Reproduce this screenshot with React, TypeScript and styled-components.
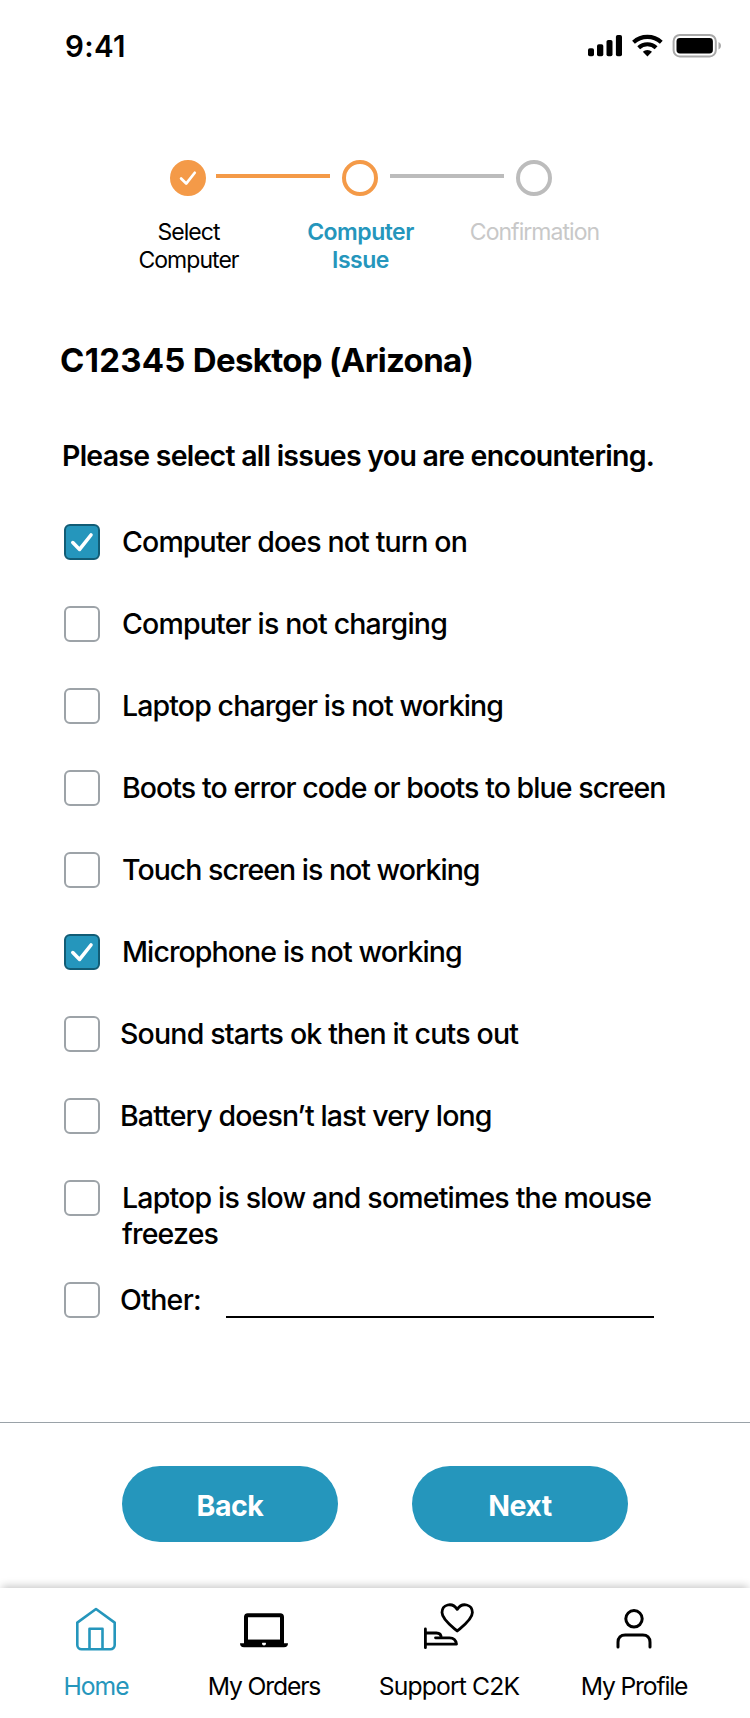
import React from 'react';
import styled, { createGlobalStyle } from 'styled-components';

const BLUE = '#2596bc';
const ORANGE = '#f49a48';
const GREY = '#bcbcbc';

const GlobalStyle = createGlobalStyle`
  *, *::before, *::after { box-sizing: border-box; }
  body { margin: 0; background: #fff; }
  button { font: inherit; border: 0; }
`;

const Screen = styled.div`
  display: flex;
  flex-direction: column;
  width: 750px;
  height: 1718px;
  overflow: hidden;
  background: #fff;
  color: #000;
  font-family: Inter, 'Liberation Sans', sans-serif;
`;

const StatusBar = styled.header`
  display: flex;
  justify-content: space-between;
  align-items: center;
  height: 92px;
  padding: 0 29px 0 65px;
`;

const Clock = styled.span`
  font-size: 29.5px;
  font-weight: 600;
  letter-spacing: 0.3px;
`;

const Stepper = styled.ol`
  display: flex;
  align-items: flex-start;
  list-style: none;
  margin: 68px 0 0 102px;
  padding: 0;
  height: 180px;
`;

const Step = styled.li<{ $width: number }>`
  display: flex;
  flex-direction: column;
  align-items: center;
  width: ${(p) => p.$width}px;
`;

const StepMark = styled.span<{ $state: StepState }>`
  display: grid;
  place-items: center;
  width: 36px;
  height: 36px;
  border-radius: 50%;
  border: 4px solid ${(p) => (p.$state === 'upcoming' ? GREY : ORANGE)};
  background: ${(p) => (p.$state === 'done' ? ORANGE : '#fff')};
`;

const StepLabel = styled.span<{ $state: StepState }>`
  margin-top: 22px;
  padding-left: 1px;
  font-size: 23px;
  line-height: 28px;
  text-align: center;
  white-space: pre-line;
  letter-spacing: ${(p) => (p.$state === 'current' ? -0.5 : -0.95)}px;
  font-weight: ${(p) => (p.$state === 'current' ? 600 : 400)};
  color: ${(p) => ({ done: '#000', current: BLUE, upcoming: '#c8c8c8' })[p.$state]};
`;

const StepLine = styled.li<{ $color: string; $lead: number }>`
  flex: none;
  width: 114px;
  height: 4px;
  margin: 14px -56px 0 ${(p) => p.$lead - 86}px;
  background: ${(p) => p.$color};
`;

const Content = styled.main`
  flex: 1;
  padding-left: 60px;
`;

const Title = styled.h1`
  margin: 0;
  font-size: 33px;
  line-height: 40px;
  font-weight: 700;
  letter-spacing: -0.68px;
`;

const AssetCode = styled.span`
  letter-spacing: 0.25px;
`;

const Prompt = styled.h2`
  margin: 58px 0 0 2px;
  font-size: 28.5px;
  line-height: 36px;
  font-weight: 600;
  letter-spacing: -0.75px;
`;

const IssueList = styled.ul`
  list-style: none;
  margin: 50px 0 0 4px;
  padding: 0;
`;

const Issue = styled.li<{ $gap: number }>`
  display: flex;
  align-items: flex-start;
  min-height: ${(p) => p.$gap}px;
`;

const CheckBox = styled.span<{ $checked?: boolean }>`
  display: grid;
  place-items: center;
  flex: none;
  width: 36px;
  height: 36px;
  border-radius: 6px;
  border: 2px solid ${(p) => (p.$checked ? '#125c75' : '#9da3a8')};
  background: ${(p) => (p.$checked ? BLUE : '#fff')};
`;

const IssueLabel = styled.span<{ $indent: number; $spacing: number }>`
  margin-left: ${(p) => p.$indent}px;
  font-size: 28.5px;
  line-height: 36px;
  font-weight: 500;
  letter-spacing: ${(p) => p.$spacing}px;
  white-space: pre-line;
`;

const OtherField = styled.span`
  width: 428px;
  height: 36px;
  margin-left: 25px;
  border-bottom: 2px solid #000;
`;

const Actions = styled.div`
  display: flex;
  justify-content: center;
  gap: 74px;
  height: 166px;
  padding-top: 43px;
  border-top: 1px solid #9aa2a8;
`;

const PillButton = styled.button`
  width: 216px;
  height: 76px;
  padding: 2px 0 0;
  border-radius: 38px;
  background: ${BLUE};
  color: #fff;
  font-size: 28.5px;
  font-weight: 700;
  letter-spacing: -0.45px;
`;

const TabBar = styled.nav`
  display: flex;
  height: 130px;
  background: #fff;
  box-shadow: 0 -4px 8px -2px rgba(0, 0, 0, 0.22);
`;

const Tab = styled.a<{ $active?: boolean; $width: number }>`
  display: flex;
  flex-direction: column;
  align-items: center;
  width: ${(p) => p.$width}px;
  padding-top: 12px;
  color: ${(p) => (p.$active ? BLUE : '#000')};
`;

const TabLabel = styled.span<{ $spacing: number }>`
  margin-top: 14px;
  font-size: 24.7px;
  line-height: 32px;
  letter-spacing: ${(p) => p.$spacing}px;
  white-space: nowrap;
`;

type StepState = 'done' | 'current' | 'upcoming';

const Tick = ({ size }: { size: number }) => (
  <svg width={size} height={size} viewBox="0 0 24 24" fill="none" stroke="#fff" strokeLinecap="round" strokeLinejoin="round">
    <path d="M2.8 12.6 9.6 19.4 21 5" strokeWidth="3.6" />
  </svg>
);

const StatusIcons = () => (
  <svg width="134" height="24" viewBox="0 -1 134 24">
    <rect x="1" y="13.3" width="6" height="8" rx="1.8" />
    <rect x="10" y="9.3" width="6.3" height="12" rx="1.8" />
    <rect x="19.5" y="5" width="6" height="16.3" rx="1.8" />
    <rect x="28.9" y="0" width="6.1" height="21.3" rx="1.8" />
    <g fill="none" stroke="#000" strokeWidth="4.1">
      <path d="M46.5 7.3a20.5 20.5 0 0 1 27.8 0" />
      <path d="M51.7 12.8a12.6 12.6 0 0 1 17.4 0" />
    </g>
    <path d="M60.4 21.4 55.8 16.8a6.5 6.5 0 0 1 9.2 0z" />
    <rect x="86.6" y="0" width="42.2" height="21.4" rx="6.2" fill="none" stroke="#a8a8a8" strokeWidth="2" />
    <rect x="89.5" y="3" width="36.4" height="15.4" rx="3.4" />
    <path d="M131.5 7v7.4c1.6-.7 2.5-2 2.5-3.7s-.9-3-2.5-3.7z" fill="#aaa" />
  </svg>
);

const HomeIcon = () => (
  <svg width="60" height="56" viewBox="0 0 60 56" fill="none" stroke="currentColor" strokeWidth="2.6" strokeLinejoin="round">
    <path d="M30 9 48.7 22.6V45a4.3 4.3 0 0 1-4.3 4.3H15.6a4.3 4.3 0 0 1-4.3-4.3V22.6Z" />
    <path d="M23.5 49V28.8h13V49" />
  </svg>
);

const LaptopIcon = () => (
  <svg width="60" height="56" viewBox="0 0 60 56" fill="currentColor">
    <path fillRule="evenodd" d="M13.8 13.3h32.4a3.8 3.8 0 0 1 3.8 3.8v25.7H10V17.1a3.8 3.8 0 0 1 3.8-3.8ZM14 17.3v22.4h32V17.3Z" />
    <path fillRule="evenodd" d="M6 43.2h4v-3.5h40v3.5h4a4 4 0 0 1-4 4H10a4 4 0 0 1-4-4ZM30 41.4a2 2 0 1 0 0 4 2 2 0 0 0 0-4Z" />
  </svg>
);

const SupportIcon = () => (
  <svg width="60" height="56" viewBox="0 0 60 56" fill="none" stroke="currentColor" strokeWidth="2.8" strokeLinecap="round" strokeLinejoin="round">
    <path d="M38.2 31C34 27.3 23 19.9 23 12.6c0-8.2 10.2-11 15.2-3.2 5-7.8 15.2-5 15.2 3.2 0 7.3-11 14.7-15.2 18.4Z" />
    <path d="M6.4 29v18.7M6.4 33h11c3 0 4.8 1.6 4.8 4.6M16.5 37.8h14c4 0 6.5 2.2 7 6.4H6.4" />
  </svg>
);

const ProfileIcon = () => (
  <svg width="60" height="56" viewBox="0 0 60 56" fill="none" stroke="currentColor" strokeWidth="3" strokeLinecap="round">
    <circle cx="30" cy="18.8" r="8.2" />
    <path d="M14 47v-4.8c0-4.5 2.8-7.2 7.2-7.2h17.6c4.4 0 7.2 2.7 7.2 7.2V47" />
  </svg>
);

const issues = [
  { text: 'Computer does not turn on', checked: true, spacing: -0.86 },
  { text: 'Computer is not charging', spacing: -0.82 },
  { text: 'Laptop charger is not working', spacing: -0.88 },
  { text: 'Boots to error code or boots to blue screen', spacing: -0.93 },
  { text: 'Touch screen is not working', spacing: -0.98 },
  { text: 'Microphone is not working', checked: true, spacing: -0.9 },
  { text: 'Sound starts ok then it cuts out', indent: 20, spacing: -0.81 },
  { text: 'Battery doesn’t last very long', indent: 20, spacing: -0.87 },
  { text: 'Laptop is slow and sometimes the mouse\nfreezes', gap: 102, spacing: -0.82 },
];

const tabs = [
  { label: 'Home', icon: <HomeIcon />, active: true, width: 192, spacing: -1.0 },
  { label: 'My Orders', icon: <LaptopIcon />, width: 144, spacing: -1.15 },
  { label: 'Support C2K', icon: <SupportIcon />, width: 226, spacing: -0.85 },
  { label: 'My Profile', icon: <ProfileIcon />, width: 144, spacing: -1.15 },
];

export default function App() {
  return (
    <Screen>
      <GlobalStyle />
      <StatusBar>
        <Clock>9:41</Clock>
        <StatusIcons />
      </StatusBar>
      <Stepper>
        <Step $width={172}>
          <StepMark $state="done"><Tick size={18} /></StepMark>
          <StepLabel $state="done">{'Select\nComputer'}</StepLabel>
        </Step>
        <StepLine $color={ORANGE} $lead={28} />
        <Step $width={172}>
          <StepMark $state="current" />
          <StepLabel $state="current">{'Computer\nIssue'}</StepLabel>
        </Step>
        <StepLine $color={GREY} $lead={30} />
        <Step $width={172}>
          <StepMark $state="upcoming" />
          <StepLabel $state="upcoming">Confirmation</StepLabel>
        </Step>
      </Stepper>
      <Content>
        <Title><AssetCode>C12345</AssetCode> Desktop (Arizona)</Title>
        <Prompt>Please select all issues you are encountering.</Prompt>
        <IssueList>
          {issues.map(({ text, checked, indent = 22, gap = 82, spacing }) => (
            <Issue key={text} $gap={gap}>
              <CheckBox $checked={checked}>{checked && <Tick size={24} />}</CheckBox>
              <IssueLabel $indent={indent} $spacing={spacing}>{text}</IssueLabel>
            </Issue>
          ))}
          <Issue $gap={36}>
            <CheckBox />
            <IssueLabel $indent={20} $spacing={-0.7}>Other:</IssueLabel>
            <OtherField />
          </Issue>
        </IssueList>
      </Content>
      <Actions>
        <PillButton>Back</PillButton>
        <PillButton>Next</PillButton>
      </Actions>
      <TabBar>
        {tabs.map(({ label, icon, active, width, spacing }) => (
          <Tab key={label} $active={active} $width={width}>
            {icon}
            <TabLabel $spacing={spacing}>{label}</TabLabel>
          </Tab>
        ))}
      </TabBar>
    </Screen>
  );
}
